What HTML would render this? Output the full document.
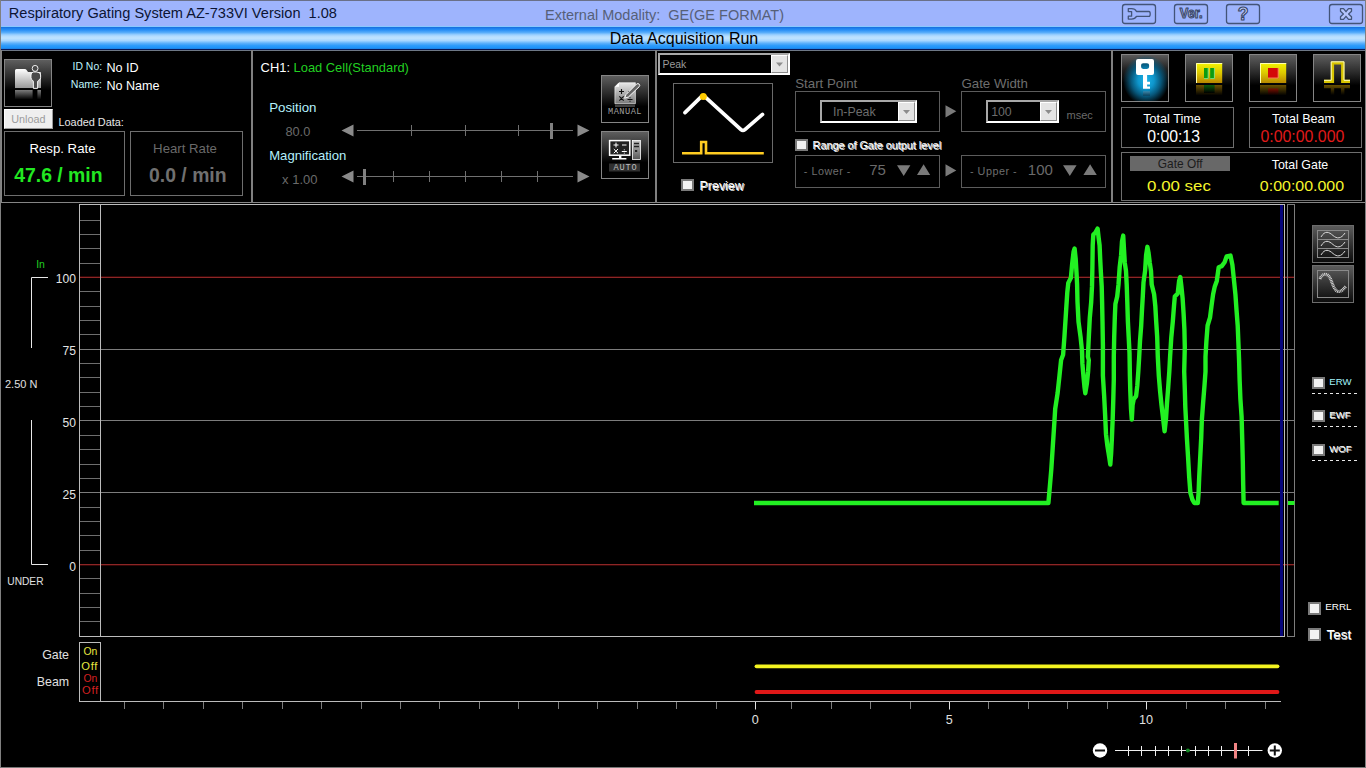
<!DOCTYPE html>
<html lang="en"><head><meta charset="utf-8"><title>Respiratory Gating System AZ-733VI</title>
<style>
html,body{margin:0;padding:0;background:#000;}
body{width:1366px;height:768px;overflow:hidden;position:relative;font-family:"Liberation Sans",Arial,sans-serif;}
.t{position:absolute;line-height:1;white-space:pre;margin:0;padding:0;}
.b{position:absolute;box-sizing:border-box;margin:0;padding:0;}
svg{position:absolute;left:0;top:0;overflow:visible;}
.ib{background:linear-gradient(180deg,#5e5e5e 0%,#2a2a2a 38%,#000 66%);border:1px solid #858585;}
.cb{background:#f2f2f2;border:2px solid #7a7a7a;}
</style></head><body>

<div class="b" style="left:0px;top:0px;width:1366px;height:26px;background:#9eb4fd;"></div>
<div class="b" style="left:0px;top:26px;width:1366px;height:1px;background:#88c8ff;"></div>
<div class="b" style="left:0px;top:27px;width:1366px;height:22px;background:linear-gradient(180deg,#1a6cd8 0%,#1c80ee 6%,#2a90f6 14%,#56acfa 25%,#9ed2ff 36%,#bae0ff 45%,#bce2ff 52%,#a6d6ff 62%,#5cb0fb 74%,#2c9afa 85%,#2094fa 93%,#1c7ee0 100%);"></div>
<div class="b" style="left:0px;top:49px;width:1366px;height:1px;background:#081a5a;"></div>
<div class="b" style="left:0px;top:0px;width:1366px;height:1px;background:#6a7088;"></div>
<div class="t" style="top:1px;font-size:14.58px;color:#0c1434;line-height:24px;height:24px;left:8.8px;">Respiratory Gating System AZ-733VI Version  1.08</div>
<div class="t" style="top:3px;font-size:14.5px;color:#566078;line-height:24px;height:24px;left:545px;">External Modality:  GE(GE FORMAT)</div>
<div class="t" style="top:27px;font-size:16px;color:#000;line-height:24px;height:24px;left:384px;width:600px;text-align:center;">Data Acquisition Run</div>
<svg width="1366" height="30" viewBox="0 0 1366 30">
<rect x="1122.5" y="4.5" width="33.0" height="19" rx="2.5" fill="none" stroke="#435478" stroke-width="1.3"/>
<rect x="1174.5" y="4.5" width="33.0" height="19" rx="2.5" fill="none" stroke="#435478" stroke-width="1.3"/>
<rect x="1226.5" y="4.5" width="33.0" height="19" rx="2.5" fill="none" stroke="#435478" stroke-width="1.3"/>
<rect x="1329.5" y="4.5" width="33.0" height="19" rx="2.5" fill="none" stroke="#435478" stroke-width="1.3"/>
<path d="M1149 11.5 H1136.5 C1135.5 9.5 1133.5 8.7 1131.5 8.7 H1128.3 V11.6 H1131.6 V16.2 H1128.3 V19.1 H1131.5 C1133.5 19.1 1135.5 18.3 1136.5 16.4 H1149 C1150.6 16.4 1150.6 11.5 1149 11.5 Z" fill="none" stroke="#435478" stroke-width="1.3" stroke-linejoin="round"/>
<path d="M1340.5 8.7 h3 l2.5 3 l2.5 -3 h3 v2.6 l-2.9 2.7 l2.9 2.7 v2.6 h-3 l-2.5 -3 l-2.5 3 h-3 v-2.6 l2.9 -2.7 l-2.9 -2.7 z" fill="#b4c4fc" stroke="#435478" stroke-width="1.3" stroke-linejoin="round"/>
<text x="1179.8" y="18.4" textLength="22.8" lengthAdjust="spacingAndGlyphs" font-family="Liberation Sans,Arial,sans-serif" font-weight="bold" font-size="14" fill="#c8d4fc" stroke="#384668" stroke-width="1.15" stroke-linejoin="round">Ver.</text>
<text x="1243.2" y="20" text-anchor="middle" font-family="Liberation Sans,Arial,sans-serif" font-weight="bold" font-size="17.5" fill="#c8d4fc" stroke="#384668" stroke-width="1.15" stroke-linejoin="round">?</text>
</svg>
<div class="b" style="left:0px;top:50px;width:1366px;height:1px;background:#6e7886;"></div>
<div class="b" style="left:0px;top:202px;width:1366px;height:1px;background:#858585;"></div>
<div class="b" style="left:0px;top:50px;width:2px;height:153px;background:#858585;"></div>
<div class="b" style="left:251px;top:50px;width:2px;height:153px;background:#808080;"></div>
<div class="b" style="left:655px;top:50px;width:2px;height:153px;background:#808080;"></div>
<div class="b" style="left:1111px;top:50px;width:2px;height:153px;background:#808080;"></div>
<div class="b ib" style="left:4px;top:59px;width:48px;height:48px;"></div>
<svg width="60" height="110" viewBox="0 0 60 110">
<defs><linearGradient id="fg" x1="0" y1="0" x2="0" y2="1"><stop offset="0" stop-color="#fff"/><stop offset="1" stop-color="#9a9a9a"/></linearGradient>
<linearGradient id="fr" x1="0" y1="0" x2="0" y2="1"><stop offset="0" stop-color="#7c7c7c"/><stop offset="1" stop-color="#000"/></linearGradient></defs>
<path d="M15 88 V70.5 Q15 69 16.5 69 H24.5 Q26 69 26.8 70.2 L28 72 H40 Q41 72 41 73 V88 Z" fill="url(#fg)"/>
<path d="M31.2 88 V70.5 H41 V88 Z" fill="#3a3a3a" opacity="0"/>
<path d="M32.2 68.4 a2.9 3 0 1 1 5.8 0 a2.9 3 0 1 1 -5.8 0 Z M31 75 Q31 72.3 33.4 72 H36.8 Q40.6 72.3 40.6 75 V77.5 Q40.6 79.6 38.6 80.3 Q37.6 80.8 37.6 82 V88.4 H33.4 V82 Q33.4 80.8 32.6 80.3 Q31 79.6 31 77.5 Z" fill="#4a4a4a" stroke="#fff" stroke-width="0.9"/>
<path d="M15 90 H32.6 V99.5 H15 Z M37.4 90 H41 V99.5 H37.4 Z" fill="url(#fr)"/>
</svg>
<div class="t" style="top:55px;font-size:10.4px;color:#bff4fc;line-height:24px;height:24px;left:72.6px;">ID No:</div>
<div class="t" style="top:56px;font-size:12.6px;color:#fff;line-height:24px;height:24px;left:106.4px;">No ID</div>
<div class="t" style="top:72px;font-size:10.6px;color:#bff4fc;line-height:24px;height:24px;left:70.8px;">Name:</div>
<div class="t" style="top:74px;font-size:12.6px;color:#fff;line-height:24px;height:24px;left:106.4px;">No Name</div>
<div class="b" style="left:4px;top:109px;width:49px;height:20px;background:#efefef;border:1px solid;border-color:#fff #9a9a9a #9a9a9a #fff;"></div>
<div class="t" style="top:107px;font-size:10.8px;color:#9c9c9c;line-height:24px;height:24px;left:-271.7px;width:600px;text-align:center;">Unload</div>
<div class="t" style="top:110px;font-size:10.9px;color:#e8e8e8;line-height:24px;height:24px;left:58.5px;">Loaded Data:</div>
<div class="b" style="left:4px;top:131px;width:121px;height:65px;border:1px solid #6e6e6e;"></div>
<div class="b" style="left:130px;top:131px;width:113px;height:65px;border:1px solid #6e6e6e;"></div>
<div class="t" style="top:137px;font-size:13.2px;color:#fff;line-height:24px;height:24px;left:-237.5px;width:600px;text-align:center;">Resp. Rate</div>
<div class="t" style="top:163px;font-size:19.4px;color:#22e822;line-height:24px;height:24px;font-weight:bold;left:-241.6px;width:600px;text-align:center;">47.6 / min</div>
<div class="t" style="top:137px;font-size:13.2px;color:#6a6a6a;line-height:24px;height:24px;left:-115px;width:600px;text-align:center;">Heart Rate</div>
<div class="t" style="top:163px;font-size:19.4px;color:#707070;line-height:24px;height:24px;font-weight:bold;left:-112.19999999999999px;width:600px;text-align:center;">0.0 / min</div>
<div class="t" style="top:56px;font-size:12.9px;color:#fff;line-height:24px;height:24px;left:260.6px;">CH1: <span style="color:#22d022">Load Cell(Standard)</span></div>
<div class="t" style="top:96px;font-size:13.3px;color:#b4f0fc;line-height:24px;height:24px;left:269.2px;">Position</div>
<div class="t" style="top:120px;font-size:12.8px;color:#6a6a6a;line-height:24px;height:24px;left:285.4px;">80.0</div>
<div class="t" style="top:144px;font-size:13.1px;color:#b4f0fc;line-height:24px;height:24px;left:269.2px;">Magnification</div>
<div class="t" style="top:168px;font-size:13px;color:#6a6a6a;line-height:24px;height:24px;left:282.1px;">x 1.00</div>
<svg width="1366" height="210" viewBox="0 0 1366 210">
<path d="M341.5 130.5 L353.5 124.5 V136.5 Z M589.5 130.5 L577.5 124.5 V136.5 Z" fill="#8a8a8a"/>
<path d="M357 130.5 H573" stroke="#707070" stroke-width="1"/>
<path d="M411.5 125.0 V136.0 M465.5 125.0 V136.0 M518.5 125.0 V136.0 " stroke="#707070" stroke-width="1"/>
<path d="M551.5 123.0 V139.0" stroke="#808080" stroke-width="3"/>
<path d="M341.5 176.5 L353.5 170.5 V182.5 Z M589.5 176.5 L577.5 170.5 V182.5 Z" fill="#8a8a8a"/>
<path d="M357 176.5 H573" stroke="#707070" stroke-width="1"/>
<path d="M393.5 171.0 V182.0 M429.5 171.0 V182.0 M465.5 171.0 V182.0 M501.5 171.0 V182.0 M537.5 171.0 V182.0 " stroke="#707070" stroke-width="1"/>
<path d="M364.5 169.0 V185.0" stroke="#808080" stroke-width="3"/>
</svg>
<div class="b ib" style="left:601px;top:75px;width:48px;height:48px;"></div>
<div class="b ib" style="left:601px;top:131px;width:48px;height:48px;"></div>
<svg width="1366" height="210" viewBox="0 0 1366 210">
<defs><linearGradient id="pg" x1="0" y1="0" x2="0" y2="1"><stop offset="0" stop-color="#e8e8e8"/><stop offset="1" stop-color="#7a7a7a"/></linearGradient>
<linearGradient id="tg" x1="0" y1="0" x2="0" y2="1"><stop offset="0" stop-color="#c8c8c8"/><stop offset="1" stop-color="#555"/></linearGradient></defs>
<path d="M619 82.7 H635.4 V103.7 H614.9 V86.8 Z" fill="url(#pg)" stroke="#fff" stroke-width="0.6"/>
<path d="M614.9 86.8 H619 V82.7 Z" fill="#fff"/>
<path d="M619 91.5 h5 M621.5 89 v5 M628 91.5 h4 M619.3 96.3 l4.4 4.4 M623.7 96.3 l-4.4 4.4 M627.5 99.5 h5 M630 97.3 v0.9 M630 100.8 v0.9" stroke="#111" stroke-width="1.1" fill="none"/>
<path d="M624.6 98.2 L626 94.6 L636.6 84 Q638 83 639.2 84.2 Q640.3 85.4 639.2 86.7 L628.4 97 Z" fill="#666" stroke="#fff" stroke-width="1"/>
<rect x="609.6" y="140.6" width="20.2" height="14.6" fill="#222" stroke="#fff" stroke-width="1.5"/>
<path d="M613.5 145 h5 M616 142.6 v4.8 M622 145 h4.5 M613.8 149 l4.2 4.2 M618 149 l-4.2 4.2 M621.8 151.5 h5 M624.3 149.4 v0.9 M624.3 152.7 v0.9" stroke="#fff" stroke-width="1" fill="none"/>
<path d="M619 156 h2.4 v2 h5 v1.6 h-14.2 v-1.6 h6.8 Z" fill="#fff"/>
<rect x="632.4" y="140.4" width="8" height="19.2" fill="url(#tg)" stroke="#fff" stroke-width="0.8"/>
<path d="M634 143.5 h5 M634 146.5 h5" stroke="#222" stroke-width="1.4"/><rect x="635" y="150" width="2.2" height="2" fill="#222"/>
<rect x="609" y="163.5" width="31" height="8" fill="#303030"/>
<rect x="615" y="104.5" width="20" height="2.5" fill="#444"/>
</svg>
<div class="t" style="top:100px;font-size:8.6px;color:#a0a0a0;line-height:24px;height:24px;letter-spacing:0.5px;font-family:'Liberation Mono',monospace;left:325px;width:600px;text-align:center;">MANUAL</div>
<div class="t" style="top:156px;font-size:8.6px;color:#bcbcbc;line-height:24px;height:24px;letter-spacing:0.8px;font-family:'Liberation Mono',monospace;left:325.5px;width:600px;text-align:center;">AUTO</div>
<div class="b" style="left:658px;top:53px;width:132px;height:22px;background:#000;border:2px solid;border-color:#a8a8a8 #fff #fff #a8a8a8;"></div>
<div class="b" style="left:771px;top:55px;width:17px;height:18px;background:#e4e4e4;border:1px solid;border-color:#fff #8c8c8c #8c8c8c #fff;"></div>
<svg width="1366" height="210"><path d="M776.0 62.5 h7 l-3.5 4 z" fill="#8c8c8c"/></svg>
<div class="t" style="top:52px;font-size:10.5px;color:#9a9a9a;line-height:24px;height:24px;left:662.4px;">Peak</div>
<div class="b" style="left:673px;top:83px;width:100px;height:80px;border:1px solid #6a6a6a;"></div>
<svg width="1366" height="210" viewBox="0 0 1366 210">
<path d="M685 112.6 L701.6 96.4 M704.8 96.6 L741 129.6 Q742.9 131.3 744.9 129.6 L762.5 114.4" fill="none" stroke="#fff" stroke-width="3.7" stroke-linecap="round" stroke-linejoin="round"/>
<circle cx="703.3" cy="96.4" r="3.5" fill="#ffcc00"/>
<path d="M682 153.2 H701.2 V142 H706 V153.2 H763.8" fill="none" stroke="#ffcc22" stroke-width="2.6"/>
<path d="M945.5 105.2 L956.3 111.3 L945.5 117.4 Z M945.5 164.3 L956.3 170.4 L945.5 176.5 Z" fill="#7a7a7a"/>
<path d="M897 165.2 H910.4 L903.7 176 Z M1063 165.2 H1076.6 L1069.8 176 Z" fill="#7a7a7a"/>
<path d="M917 175 H930.2 L923.6 164.2 Z M1083.4 175 H1096.8 L1090.1 164.2 Z" fill="#7a7a7a"/>
</svg>
<div class="b cb" style="left:681px;top:179px;width:13px;height:12px;"></div>
<div class="t" style="top:174px;font-size:12.4px;color:#fff;line-height:24px;height:24px;left:699.6px;text-shadow:1px 1px 0 #d8d8d8;">Preview</div>
<div class="t" style="top:72px;font-size:13.3px;color:#6e6e6e;line-height:24px;height:24px;left:795.2px;">Start Point</div>
<div class="t" style="top:72px;font-size:13.3px;color:#6e6e6e;line-height:24px;height:24px;left:961.4px;">Gate Width</div>
<div class="b" style="left:795px;top:91px;width:145px;height:41px;border:1px solid #5c5c5c;"></div>
<div class="b" style="left:961px;top:91px;width:145px;height:41px;border:1px solid #5c5c5c;"></div>
<div class="b" style="left:820px;top:100px;width:97px;height:23px;background:#000;border:2px solid;border-color:#a8a8a8 #fff #fff #a8a8a8;"></div>
<div class="b" style="left:898px;top:102px;width:17px;height:19px;background:#e4e4e4;border:1px solid;border-color:#fff #8c8c8c #8c8c8c #fff;"></div>
<svg width="1366" height="210"><path d="M903.0 110.0 h7 l-3.5 4 z" fill="#8c8c8c"/></svg>
<div class="t" style="top:100px;font-size:12.4px;color:#6c6c6c;line-height:24px;height:24px;left:833px;">In-Peak</div>
<div class="b" style="left:986px;top:100px;width:73px;height:23px;background:#000;border:2px solid;border-color:#a8a8a8 #fff #fff #a8a8a8;"></div>
<div class="b" style="left:1040px;top:102px;width:17px;height:19px;background:#e4e4e4;border:1px solid;border-color:#fff #8c8c8c #8c8c8c #fff;"></div>
<svg width="1366" height="210"><path d="M1045.0 110.0 h7 l-3.5 4 z" fill="#8c8c8c"/></svg>
<div class="t" style="top:100px;font-size:12.3px;color:#6c6c6c;line-height:24px;height:24px;left:991.2px;">100</div>
<div class="t" style="top:103px;font-size:11px;color:#6a6a6a;line-height:24px;height:24px;left:1066.6px;">msec</div>
<div class="b cb" style="left:795px;top:139px;width:13px;height:12px;"></div>
<div class="t" style="top:133px;font-size:10.8px;color:#fff;line-height:24px;height:24px;left:812.6px;text-shadow:1px 1px 0 #e0e0e0;">Range of Gate output level</div>
<div class="b" style="left:795px;top:155px;width:145px;height:33px;border:1px solid #5c5c5c;"></div>
<div class="b" style="left:961px;top:155px;width:145px;height:33px;border:1px solid #5c5c5c;"></div>
<div class="t" style="top:159px;font-size:10.8px;color:#6e6e6e;line-height:24px;height:24px;letter-spacing:0.5px;left:803.8px;">- Lower -</div>
<div class="t" style="top:158px;font-size:15px;color:#6a6a6a;line-height:24px;height:24px;left:869.2px;">75</div>
<div class="t" style="top:159px;font-size:10.8px;color:#6e6e6e;line-height:24px;height:24px;letter-spacing:0.5px;left:970px;">- Upper -</div>
<div class="t" style="top:158px;font-size:15px;color:#6a6a6a;line-height:24px;height:24px;left:1027.8px;">100</div>
<div class="b ib" style="left:1121px;top:54px;width:48px;height:48px;background:radial-gradient(ellipse 23px 25px at 24px 25px,#1cb4e8 0%,#0e96cc 35%,#07587c 65%,rgba(0,0,0,0) 100%),linear-gradient(180deg,#5a5a5a 0%,#222 30%,#000 60%);"></div>
<div class="b ib" style="left:1185px;top:54px;width:48px;height:48px;"></div>
<div class="b ib" style="left:1249px;top:54px;width:48px;height:48px;"></div>
<div class="b ib" style="left:1313px;top:54px;width:48px;height:48px;"></div>
<svg width="1366" height="210" viewBox="0 0 1366 210">
<defs><linearGradient id="yg" x1="0" y1="0" x2="0" y2="1"><stop offset="0" stop-color="#f4f400"/><stop offset="0.5" stop-color="#dcc800"/><stop offset="1" stop-color="#b88800"/></linearGradient>
<linearGradient id="yr" x1="0" y1="0" x2="0" y2="1"><stop offset="0" stop-color="#6a5000"/><stop offset="1" stop-color="#000"/></linearGradient>
<linearGradient id="gr" x1="0" y1="0" x2="0" y2="1"><stop offset="0" stop-color="#0a5a0a"/><stop offset="1" stop-color="#000"/></linearGradient>
<linearGradient id="rr" x1="0" y1="0" x2="0" y2="1"><stop offset="0" stop-color="#7a1000"/><stop offset="1" stop-color="#000"/></linearGradient>
<linearGradient id="kr" x1="0" y1="0" x2="0" y2="1"><stop offset="0" stop-color="#4a88a8"/><stop offset="1" stop-color="#0a3850"/></linearGradient></defs>
<path fill-rule="evenodd" d="M1138 59 H1152 Q1154 59 1154 61 V73 Q1154 75 1152 75 H1147.1 V81.8 H1150 V84.6 H1147.1 V86.4 H1150 V88.8 H1143 V75 H1138 Q1136 75 1136 73 V61 Q1136 59 1138 59 Z M1143.2 63.2 H1147 Q1149.1 63.2 1149.1 65 V67.1 Q1149.1 68.9 1147 68.9 H1143.2 Q1141.1 68.9 1141.1 67.1 V65 Q1141.1 63.2 1143.2 63.2 Z" fill="#fff"/>
<rect x="1143" y="91.3" width="7" height="4.4" fill="url(#kr)" opacity="0.8"/>
<rect x="1196" y="63" width="26.2" height="20" fill="url(#yg)"/><path d="M1196.5 83 V63.5 H1222.2" fill="none" stroke="#ffffb0" stroke-width="1"/>
<rect x="1204" y="68" width="4.4" height="11" fill="#0c9c10"/><rect x="1210.2" y="68" width="4.4" height="11" fill="#0c9c10"/>
<path d="M1204 78.6 H1208.2 V68 M1210.2 78.6 H1214.4 V68" fill="none" stroke="#9cf09c" stroke-width="0.8"/>
<rect x="1196" y="85" width="26.2" height="10.5" fill="url(#yr)"/><rect x="1204" y="85" width="10.6" height="8" fill="url(#gr)"/>
<rect x="1260" y="63" width="26.2" height="20" fill="url(#yg)"/><path d="M1260.5 83 V63.5 H1286.2" fill="none" stroke="#ffffb0" stroke-width="1"/>
<rect x="1268" y="68" width="10.4" height="10.2" fill="#d40808"/><path d="M1268 78 H1278.2 V68" fill="none" stroke="#ff9a70" stroke-width="0.8"/>
<rect x="1260" y="85" width="26.2" height="10.5" fill="url(#yr)"/><rect x="1268" y="88.5" width="10.4" height="7" fill="url(#rr)"/>
<path d="M1324 81.4 H1332.5 V63 H1342.7 V81.4 H1350" fill="none" stroke="#d8c400" stroke-width="3.2"/>
<path d="M1324 80.3 H1331.2 V61.8 H1344 V80.3 H1350" fill="none" stroke="#ffffc0" stroke-width="1"/>
<path d="M1324 86.6 H1350 M1332.5 85 V95 M1342.7 85 V95" fill="none" stroke="url(#yr)" stroke-width="3.4"/>
</svg>
<div class="b" style="left:1121px;top:107px;width:113px;height:41px;border:1px solid #6e6e6e;"></div>
<div class="b" style="left:1249px;top:107px;width:113px;height:41px;border:1px solid #6e6e6e;"></div>
<div class="b" style="left:1121px;top:152px;width:241px;height:49px;border:1px solid #6e6e6e;"></div>
<div class="b" style="left:1130px;top:156px;width:100px;height:15px;background:#686868;"></div>
<div class="t" style="top:107px;font-size:12.6px;color:#fff;line-height:24px;height:24px;left:872px;width:600px;text-align:center;">Total Time</div>
<div class="t" style="top:125px;font-size:15.8px;color:#fff;line-height:24px;height:24px;left:873.5999999999999px;width:600px;text-align:center;">0:00:13</div>
<div class="t" style="top:107px;font-size:12.6px;color:#fff;line-height:24px;height:24px;left:1003.5999999999999px;width:600px;text-align:center;">Total Beam</div>
<div class="t" style="top:125px;font-size:15.9px;color:#e01a1a;line-height:24px;height:24px;left:1002.4000000000001px;width:600px;text-align:center;">0:00:00.000</div>
<div class="t" style="top:152px;font-size:11.9px;color:#1c1c1c;line-height:24px;height:24px;left:880.2px;width:600px;text-align:center;">Gate Off</div>
<div class="t" style="top:174px;font-size:15.2px;color:#f6f62c;line-height:24px;height:24px;left:879.0999999999999px;width:600px;text-align:center;transform:scaleX(1.11);">0.00 sec</div>
<div class="t" style="top:153px;font-size:12.4px;color:#fff;line-height:24px;height:24px;left:1000px;width:600px;text-align:center;">Total Gate</div>
<div class="t" style="top:174px;font-size:15.2px;color:#f6f62c;line-height:24px;height:24px;left:1001.5999999999999px;width:600px;text-align:center;transform:scaleX(1.05);">0:00:00.000</div>
<div class="b" style="left:0px;top:0px;width:1px;height:768px;background:#808080;"></div>
<div class="b" style="left:1365px;top:0px;width:1px;height:768px;background:#808080;"></div>
<div class="b" style="left:0px;top:767px;width:1366px;height:1px;background:#787878;"></div>
<div class="t" style="top:253px;font-size:10.4px;color:#20d020;line-height:24px;height:24px;left:36.2px;">In</div>
<div class="t" style="top:372px;font-size:11px;color:#e0e0e0;line-height:24px;height:24px;left:5px;">2.50 N</div>
<div class="t" style="top:570px;font-size:10.2px;color:#e0e0e0;line-height:24px;height:24px;left:7.3px;">UNDER</div>
<div class="t" style="top:267px;font-size:12.1px;color:#e4e4e4;line-height:24px;height:24px;right:1290px;">100</div>
<div class="t" style="top:339px;font-size:12.1px;color:#e4e4e4;line-height:24px;height:24px;right:1290px;">75</div>
<div class="t" style="top:411px;font-size:12.1px;color:#e4e4e4;line-height:24px;height:24px;right:1290px;">50</div>
<div class="t" style="top:483px;font-size:12.1px;color:#e4e4e4;line-height:24px;height:24px;right:1290px;">25</div>
<div class="t" style="top:555px;font-size:12.1px;color:#e4e4e4;line-height:24px;height:24px;right:1290px;">0</div>
<div class="t" style="top:643px;font-size:12.4px;color:#e0e0e0;line-height:24px;height:24px;right:1297px;">Gate</div>
<div class="t" style="top:670px;font-size:12.4px;color:#e0e0e0;line-height:24px;height:24px;right:1296.8px;">Beam</div>
<div class="t" style="top:640px;font-size:10.4px;color:#e8e840;line-height:24px;height:24px;left:83.4px;">On</div>
<div class="t" style="top:654px;font-size:11.2px;color:#e8e840;line-height:24px;height:24px;letter-spacing:0.7px;left:81.3px;">Off</div>
<div class="t" style="top:667px;font-size:10.4px;color:#d42020;line-height:24px;height:24px;left:83.4px;">On</div>
<div class="t" style="top:678px;font-size:11.2px;color:#d42020;line-height:24px;height:24px;letter-spacing:0.7px;left:82px;">Off</div>
<div class="t" style="top:708px;font-size:12.6px;color:#e0e0e0;line-height:24px;height:24px;left:455.29999999999995px;width:600px;text-align:center;">0</div>
<div class="t" style="top:708px;font-size:12.6px;color:#e0e0e0;line-height:24px;height:24px;left:649.3px;width:600px;text-align:center;">5</div>
<div class="t" style="top:708px;font-size:12.6px;color:#e0e0e0;line-height:24px;height:24px;left:846px;width:600px;text-align:center;">10</div>
<svg width="1366" height="768" viewBox="0 0 1366 768">
<path d="M48 277.5 H31.5 V348 M31.5 420 V564.5 H48" fill="none" stroke="#e8e8e8" stroke-width="1"/>
<path d="M80 220.5 H100 M80 234.5 H100 M80 248.5 H100 M80 263.5 H100 M80 291.5 H100 M80 306.5 H100 M80 320.5 H100 M80 334.5 H100 M80 363.5 H100 M80 377.5 H100 M80 392.5 H100 M80 406.5 H100 M80 435.5 H100 M80 449.5 H100 M80 464.5 H100 M80 478.5 H100 M80 507.5 H100 M80 521.5 H100 M80 535.5 H100 M80 550.5 H100 M80 578.5 H100 M80 593.5 H100 M80 607.5 H100 M80 621.5 H100 " stroke="#6e6e6e" stroke-width="1"/>
<path d="M80 349.5 H1294 M80 420.5 H1294 M80 492.5 H1294" stroke="#7c7c7c" stroke-width="1"/>
<path d="M80 276.5 H1294 M80 565.5 H1294" stroke="#340606" stroke-width="1"/>
<path d="M80 277.5 H1294 M80 564.5 H1294" stroke="#8c2626" stroke-width="1"/>
<rect x="1287.5" y="204.5" width="7" height="432" fill="none" stroke="#7c7c7c" stroke-width="1"/>
<path d="M754.0 503.0 L1048.4 503.0 L1049.8 487.0 L1051.3 469.4 L1052.7 447.9 L1054.1 426.4 L1055.2 408.8 L1057.6 393.2 L1059.5 375.6 L1061.1 360.0 L1063.1 354.8 L1064.4 337.2 L1065.4 321.6 L1066.4 306.0 L1067.3 292.3 L1068.3 282.9 L1070.9 277.8 L1072.2 263.4 L1073.6 251.6 L1074.6 248.5 L1075.7 259.1 L1076.5 272.7 L1077.1 284.5 L1077.5 302.0 L1078.5 321.6 L1080.6 337.2 L1082.0 350.9 L1082.4 363.9 L1083.4 375.6 L1084.5 387.3 L1085.3 393.2 L1086.9 383.4 L1088.1 371.7 L1088.8 360.0 L1087.9 356.7 L1088.8 337.2 L1089.8 317.7 L1091.2 302.0 L1092.0 286.4 L1092.4 266.9 L1092.7 245.4 L1093.3 234.8 L1095.7 232.1 L1097.6 228.6 L1098.6 237.6 L1099.6 245.4 L1100.2 259.1 L1100.9 272.7 L1101.7 286.4 L1102.1 302.0 L1102.5 321.6 L1102.9 345.0 L1102.9 375.6 L1104.1 395.2 L1105.1 414.7 L1106.0 434.2 L1107.4 446.0 L1109.3 457.7 L1110.3 464.5 L1111.1 453.8 L1111.9 438.1 L1112.7 418.6 L1113.3 399.1 L1113.8 379.5 L1113.8 356.7 L1114.2 337.2 L1114.8 317.7 L1115.4 304.0 L1117.2 296.6 L1118.5 284.5 L1119.7 266.9 L1121.1 255.2 L1122.0 241.5 L1123.2 235.6 L1124.0 249.3 L1124.8 263.0 L1126.0 270.8 L1126.7 284.5 L1127.3 302.0 L1127.9 321.6 L1128.7 337.2 L1129.5 352.8 L1129.9 375.6 L1130.3 391.3 L1131.0 408.8 L1131.8 419.6 L1132.6 404.9 L1133.8 399.1 L1136.1 396.1 L1137.3 385.4 L1138.3 371.7 L1139.2 356.7 L1140.0 341.1 L1141.2 325.5 L1142.0 309.9 L1142.8 296.2 L1143.5 282.5 L1145.1 270.8 L1146.1 255.2 L1147.4 246.8 L1148.6 253.2 L1149.8 263.0 L1151.0 270.8 L1151.7 284.5 L1154.1 294.2 L1155.3 306.0 L1156.2 321.6 L1157.2 337.2 L1157.8 356.7 L1158.8 375.6 L1160.1 391.3 L1161.5 404.9 L1163.1 418.6 L1164.6 431.3 L1166.0 418.6 L1167.0 403.0 L1168.2 387.3 L1169.3 371.7 L1170.1 356.7 L1171.3 337.2 L1172.8 321.6 L1174.0 306.0 L1174.8 296.6 L1177.7 293.5 L1179.1 280.9 L1180.3 277.0 L1181.4 286.4 L1182.6 298.1 L1183.6 313.8 L1184.4 329.4 L1184.8 347.0 L1184.2 371.7 L1184.8 389.3 L1185.3 406.9 L1186.1 422.5 L1186.9 438.1 L1188.1 457.7 L1189.2 477.2 L1190.4 492.8 L1192.4 499.7 L1194.3 503.0 L1197.8 503.0 L1198.6 492.8 L1199.2 477.2 L1200.2 457.7 L1201.2 438.1 L1201.8 420.6 L1203.1 403.0 L1204.5 385.4 L1205.5 371.7 L1205.5 356.7 L1206.4 341.1 L1207.6 325.5 L1210.0 317.7 L1211.5 306.0 L1213.1 294.2 L1214.8 286.4 L1216.8 280.9 L1218.7 267.3 L1221.7 266.1 L1224.6 262.2 L1226.6 256.5 L1230.5 255.6 L1232.4 264.9 L1233.8 278.6 L1235.4 294.2 L1236.5 309.9 L1237.7 325.5 L1238.5 345.0 L1239.1 360.7 L1239.6 379.5 L1240.4 399.1 L1241.6 416.7 L1242.2 438.1 L1242.8 461.6 L1243.2 485.0 L1243.6 503.0 L1278.7 503.0" fill="none" stroke="#22f022" stroke-width="4.4" stroke-linejoin="round" stroke-linecap="butt"/>
<path d="M1288 503 H1294.5" stroke="#22f022" stroke-width="4"/>
<rect x="1280" y="205" width="3" height="431" fill="#06067c"/>
<rect x="79.5" y="204.5" width="1205" height="432" fill="none" stroke="#bcbcbc" stroke-width="1"/>
<path d="M100.5 205 V636 " stroke="#bcbcbc" stroke-width="1"/>
<rect x="79.5" y="642.5" width="21" height="59" fill="none" stroke="#bcbcbc" stroke-width="1"/>
<path d="M100 701.5 H1281" stroke="#bcbcbc" stroke-width="1"/>
<path d="M716.5 702 V709 M676.5 702 V709 M637.5 702 V709 M597.5 702 V709 M558.5 702 V709 M518.5 702 V709 M479.5 702 V709 M439.5 702 V709 M400.5 702 V709 M361.5 702 V709 M321.5 702 V709 M282.5 702 V709 M242.5 702 V709 M203.5 702 V709 M163.5 702 V709 M124.5 702 V709 M791.5 702 V709 M831.5 702 V709 M870.5 702 V709 M910.5 702 V709 M988.5 702 V709 M1028.5 702 V709 M1067.5 702 V709 M1107.5 702 V709 M1186.5 702 V709 M1225.5 702 V709 M1265.5 702 V709 " stroke="#7c7c7c" stroke-width="1"/>
<path d="M755.5 702 V709.5 M949.5 702 V709.5 M1146.5 702 V709.5" stroke="#e0e0e0" stroke-width="1"/>
<path d="M756.5 666.3 H1277.5" stroke="#f4f420" stroke-width="3.8" stroke-linecap="round"/>
<path d="M756.5 692 H1277.5" stroke="#e01818" stroke-width="3.8" stroke-linecap="round"/>
<circle cx="1100" cy="750.5" r="7.2" fill="#fff"/><path d="M1095 750.5 H1105" stroke="#111" stroke-width="2"/>
<circle cx="1274.8" cy="750.5" r="7.2" fill="#fff"/><path d="M1269.8 750.5 H1279.8 M1274.8 745.5 V755.5" stroke="#111" stroke-width="2"/>
<path d="M1115 750.5 H1262.5" stroke="#f0f0f0" stroke-width="1"/>
<path d="M1128.5 746 V756 M1141.5 746 V756 M1155.5 746 V756 M1168.5 746 V756 M1181.5 746 V756 M1195.5 746 V756 M1208.5 746 V756 M1221.5 746 V756 M1248.5 746 V756 " stroke="#f0f0f0" stroke-width="1"/>
<circle cx="1187.9" cy="750.5" r="2" fill="#128a24"/>
<rect x="1234" y="743" width="3" height="15.5" fill="#f08484"/>
</svg>
<div class="b" style="left:1312px;top:225px;width:42px;height:38px;background:linear-gradient(180deg,#5c5c5c 0%,#333 50%,#0c0c0c 100%);border:1px solid #6c6c6c;"></div>
<div class="b" style="left:1312px;top:265px;width:42px;height:38px;background:linear-gradient(180deg,#5c5c5c 0%,#333 50%,#0c0c0c 100%);border:1px solid #6c6c6c;"></div>
<svg width="1366" height="768" viewBox="0 0 1366 768">
<rect x="1317.5" y="230.5" width="31" height="27" fill="none" stroke="#8a8a8a" stroke-width="1"/>
<path d="M1317.5 239.5 H1348.5 M1317.5 248.5 H1348.5" stroke="#8a8a8a" stroke-width="1"/>
<path d="M1321 237 C1325 230 1329 232 1333 235.5 S1341 239 1345 233" fill="none" stroke="#d8d8d8" stroke-width="1"/>
<path d="M1321 246 C1325 239 1329 241 1333 244.5 S1341 248 1345 242" fill="none" stroke="#d8d8d8" stroke-width="1"/>
<path d="M1321 255 C1325 248 1329 250 1333 253.5 S1341 257 1345 251" fill="none" stroke="#d8d8d8" stroke-width="1"/>
<rect x="1317.5" y="270.5" width="31" height="27" fill="none" stroke="#8a8a8a" stroke-width="1"/>
<path d="M1320 279 C1322 273 1328 272 1331 280 C1334 288 1337 298 1346 286" fill="none" stroke="#cfcfcf" stroke-width="3" stroke-dasharray="1 0.6"/>
</svg>
<div class="b cb" style="left:1312px;top:377px;width:13px;height:12px;"></div>
<div class="t" style="top:370px;font-size:9.6px;color:#a4f4fc;line-height:24px;height:24px;left:1329.3px;">ERW</div>
<div class="b" style="left:1312px;top:393px;width:46px;height:1px;background:repeating-linear-gradient(90deg,#e8e8e8 0 3px,transparent 3px 6px);"></div>
<div class="b cb" style="left:1312px;top:410px;width:13px;height:12px;"></div>
<div class="t" style="top:403px;font-size:9.6px;color:#fff;line-height:24px;height:24px;left:1329.3px;text-shadow:0.7px 0.7px 0 #ccc;">EWF</div>
<div class="b" style="left:1312px;top:426px;width:46px;height:1px;background:repeating-linear-gradient(90deg,#e8e8e8 0 3px,transparent 3px 6px);"></div>
<div class="b cb" style="left:1312px;top:444px;width:13px;height:12px;"></div>
<div class="t" style="top:437px;font-size:9.6px;color:#fff;line-height:24px;height:24px;left:1329.3px;text-shadow:0.7px 0.7px 0 #ccc;">WOF</div>
<div class="b" style="left:1312px;top:460px;width:46px;height:1px;background:repeating-linear-gradient(90deg,#e8e8e8 0 3px,transparent 3px 6px);"></div>
<div class="b cb" style="left:1308px;top:602px;width:13px;height:13px;"></div>
<div class="t" style="top:595px;font-size:9.9px;color:#fff;line-height:24px;height:24px;left:1325.2px;">ERRL</div>
<div class="b cb" style="left:1308px;top:628px;width:13px;height:13px;"></div>
<div class="t" style="top:623px;font-size:13.5px;color:#fff;line-height:24px;height:24px;left:1326.4px;text-shadow:0.7px 0.7px 0 #ccc;">Test</div>
</body></html>
